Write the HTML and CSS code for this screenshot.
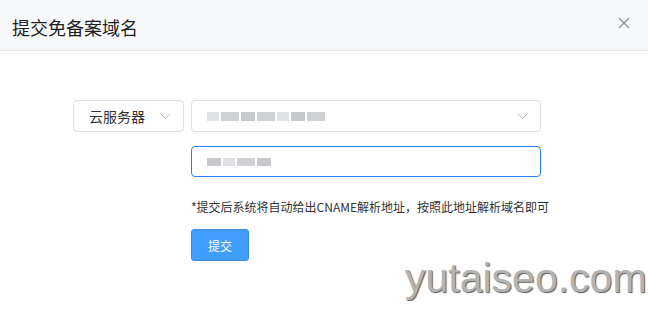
FILE: index.html
```html
<!DOCTYPE html>
<html>
<head>
    <meta charset="UTF-8">
    <title>提交免备案域名</title>
    <link rel="stylesheet" href="styles.css">
</head>
<body>
    <div class="dialog">
        <header class="dialog-header">
            <h1>提交免备案域名</h1>
            <svg class="close" width="12" height="12" viewBox="0 0 12 12">
                <path d="M1 1L11 11M11 1L1 11" stroke="#8a8f99" stroke-width="1.2" fill="none"/>
            </svg>
        </header>

        <div class="dialog-body">
            <div class="row">
                <div class="select select-type">
                    <span>云服务器</span>
                    <svg class="arrow" width="11" height="6" viewBox="0 0 11 6"><path d="M0.5 0.5L5.5 5.5L10.5 0.5" stroke="#b4bccc" fill="none"/></svg>
                </div>
                <div class="select select-server">
                    <span class="blur">
                        <i class="b1"></i><i class="b2"></i><i class="b3"></i><i class="b2"></i><i class="b1"></i><i class="b3"></i><i class="b2"></i>
                    </span>
                    <svg class="arrow" width="11" height="6" viewBox="0 0 11 6"><path d="M0.5 0.5L5.5 5.5L10.5 0.5" stroke="#b4bccc" fill="none"/></svg>
                </div>
            </div>
            <div class="row indent">
                <div class="input">
                    <span class="blur small">
                        <i class="b3"></i><i class="b1"></i><i class="b2"></i><i class="b3"></i>
                    </span>
                </div>
            </div>
            <p class="note">*提交后系统将自动给出CNAME解析地址，按照此地址解析域名即可</p>
            <div class="indent">
                <button class="btn">提交</button>
            </div>
        </div>
        <div class="watermark">yutaiseo.com</div>
    </div>
</body>
</html>
```

FILE: styles.css
```css
body {
    margin: 0;
    font-family: "Noto Sans CJK SC", "Liberation Sans", sans-serif;
    background: #ffffff;
    color: #303133;
}
.dialog {
    width: 648px;
    height: 309px;
    position: relative;
    overflow: hidden;
}
.dialog-header {
    height: 51px;
    background: #f8f9fb;
    border-bottom: 1px solid #e4e6ea;
    display: flex;
    align-items: center;
    justify-content: space-between;
    padding: 0 18px 0 12px;
    box-sizing: border-box;
}
.dialog-header h1 {
    margin: 0;
    font-size: 18px;
    font-weight: normal;
    color: #1f1f1f;
    position: relative;
    top: 2px;
}
.close {
    margin-top: -5px;
}
.dialog-body {
    padding: 49px 0 0 73px;
}
.row {
    display: flex;
    gap: 7px;
}
.indent {
    padding-left: 118px;
}
.row.indent {
    margin-top: 14px;
}
.select, .input {
    height: 32px;
    box-sizing: border-box;
    border: 1px solid #dcdfe6;
    border-radius: 4px;
    display: flex;
    align-items: center;
    justify-content: space-between;
    padding: 0 12px 0 15px;
    font-size: 14px;
}
.select-type {
    width: 111px;
}
.select-server {
    width: 350px;
}
.input {
    width: 350px;
    height: 31px;
    border-color: #2a7ff2;
}
.blur {
    display: flex;
    align-items: center;
    gap: 2px;
}
.blur i {
    display: block;
    height: 9px;
    background: #d4d6da;
}
.blur .b1 { width: 12px; background: #dfe1e4; }
.blur .b2 { width: 18px; background: #cfd1d5; }
.blur .b3 { width: 14px; background: #c6c8cc; }
.blur.small i { height: 8px; }
.note {
    margin: 21px 0 0 118px;
    font-size: 12px;
    color: #333333;
}
.note + .indent {
    margin-top: 14px;
}
.btn {
    width: 58px;
    height: 32px;
    border: 1px solid #3a8ee6;
    border-radius: 3px;
    background: #409eff;
    color: #ffffff;
    font-family: "Noto Sans CJK SC", sans-serif;
    font-size: 12px;
    padding: 0;
}
.watermark {
    position: absolute;
    left: 405px;
    top: 255px;
    font-family: "Liberation Sans", Arial, sans-serif;
    font-size: 41px;
    color: #b3b3b3;
    text-shadow: 1px 1px 1px #5a5a5a;
}
```
